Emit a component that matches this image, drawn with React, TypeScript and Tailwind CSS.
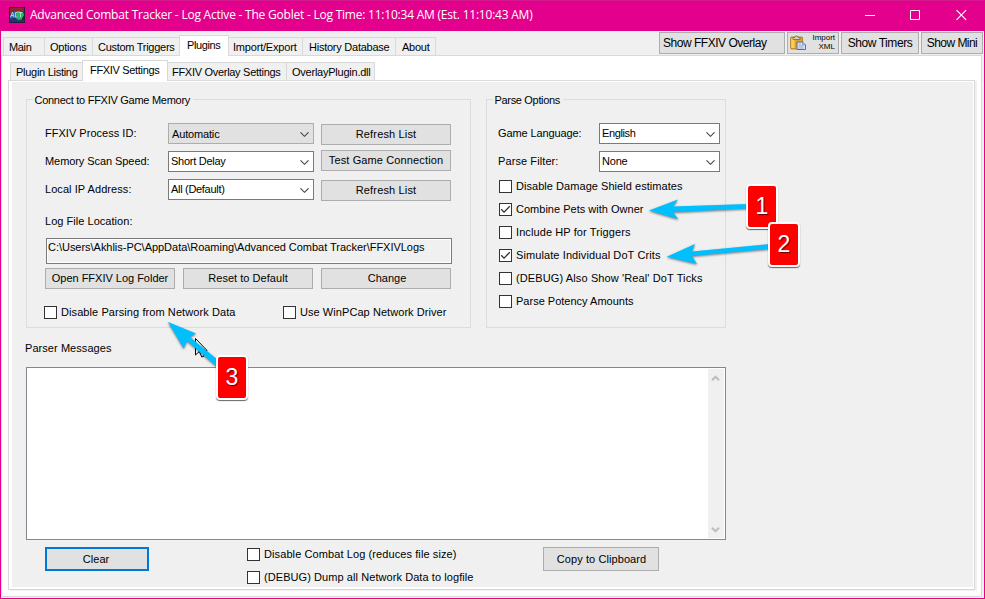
import { useLayoutEffect, useRef, type ReactNode } from "react";

/** Single-line text whose tracking is adjusted so that it spans `w` pixels. */
function T({ w, children, className = "" }: { w: number; children: string; className?: string }) {
  const ref = useRef<HTMLSpanElement>(null);
  useLayoutEffect(() => {
    const el = ref.current;
    if (!el) return;
    el.style.letterSpacing = "0px";
    const natural = el.getBoundingClientRect().width;
    el.style.letterSpacing = `${(w - 0.5 - natural) / children.length}px`;
  }, [w, children]);
  return (
    <span ref={ref} className={`inline-block shrink-0 self-start leading-[14px] whitespace-pre ${className}`}>
      {children}
    </span>
  );
}

function Tab({ text, w, className }: { text: string; w: number; className: string }) {
  return (
    <div className={`box-border flex h-[18px] shrink-0 border-t border-[#d9d9d9] bg-[#f0f0f0] pt-0.5 ${className}`}>
      <T w={w}>{text}</T>
    </div>
  );
}

function ActiveTab({ text, w, className }: { text: string; w: number; className: string }) {
  return (
    <div className={`relative z-10 -mb-px flex h-[21px] shrink-0 border-x border-t border-[#d9d9d9] bg-white pt-0.5 ${className}`}>
      <T w={w}>{text}</T>
    </div>
  );
}

function Button({ text, w, className = "" }: { text: string; w: number; className?: string }) {
  return (
    <button className={`flex h-[21px] w-[130px] shrink-0 justify-center border border-[#adadad] bg-[#e1e1e1] pt-0.5 ${className}`}>
      <T w={w}>{text}</T>
    </button>
  );
}

function Select({ text, w, className }: { text: string; w: number; className: string }) {
  return (
    <div className={`flex h-[21px] shrink-0 items-center justify-between border pr-1 ${className}`}>
      <T w={w}>{text}</T>
      <svg className="mb-px h-[5px] w-[9px]" viewBox="0 0 9 5" fill="none" stroke="#4a4a4a" strokeWidth="1.1">
        <path d="M0.5 0.3 4.5 4.3 8.5 0.3" />
      </svg>
    </div>
  );
}

function Check({ text, w, on = false }: { text: string; w: number; on?: boolean }) {
  return (
    <label className="flex h-[13px] shrink-0 gap-1">
      <span className="flex size-[13px] shrink-0 border border-[#333] bg-white">
        {on && (
          <svg className="size-[11px]" viewBox="0 0 11 11" fill="none" stroke="#333" strokeWidth="1.3">
            <path d="M1.2 5.3 4 8.1 9.8 2.3" />
          </svg>
        )}
      </span>
      <T w={w} className="-mt-px">{text}</T>
    </label>
  );
}

function Group({ title, w, className, children }: { title: string; w: number; className: string; children: ReactNode }) {
  return (
    <section className={`flex h-[229px] shrink-0 flex-col border border-[#dcdcdc] ${className}`}>
      <h2 className="-mt-[7px] ml-1.5 flex h-[14px] self-start bg-[#f0f0f0] pr-[3px] pl-[1.5px]">
        <T w={w}>{title}</T>
      </h2>
      {children}
    </section>
  );
}

function Badge({ n, className }: { n: string; className: string }) {
  return (
    <div
      className={`absolute flex h-[45px] w-[32px] items-center justify-center rounded-[4px] border-2 border-white bg-[#ff0000] pb-px text-[23px] leading-none text-white shadow-[0_1px_1px_rgba(0,0,0,0.6)] [text-shadow:1px_1px_1px_rgba(0,0,0,0.6)] ${className}`}
    >
      {n}
    </div>
  );
}

function AppIcon() {
  return (
    <svg className="mt-[6px] size-4" viewBox="0 0 16 16">
      <rect width="16" height="16" fill="#171d48" />
      <path d="M1 1h14v4l-4-1-5 1-5 3z" fill="#8f2430" />
      <path d="M1 9l4-4 5-1 5 3-2 5-4 2-3-3-5 1z" fill="#2f6bbd" />
      <path d="M8 4l6 1 1 3-3 5-3-1-2-4z" fill="#35b845" />
      <path d="M1 12l5-1 3 3 6-2v3H1z" fill="#27336f" />
      <path d="M1.500 10 3.500 5l1.500 5M2.200 8.500h2.400M8.500 5.500H6.500v4.500h2M9.500 5.500h4M11.500 5.500V10" stroke="#a9dbe2" strokeWidth=".9" fill="none" />
      <rect x=".5" y=".5" width="15" height="15" fill="none" stroke="#24203c" />
    </svg>
  );
}

function PasteIcon() {
  return (
    <svg className="mt-0.5 ml-0.5 size-4" viewBox="0 0 16 16">
      <rect x=".6" y="2" width="12" height="12" rx="1" fill="#e3a02a" stroke="#a8741c" strokeWidth=".8" />
      <path d="M1.200 3h3.300v10H1.200z" fill="#f9cf58" />
      <path d="M3 4.500V2.500h2L5.500 1h2L8 2.500h2v2z" fill="#d8d8c8" stroke="#6d6444" strokeWidth=".8" />
      <path d="M7 7h5.500l3 3v4.500H7z" fill="#dce8f8" stroke="#50627f" strokeWidth=".9" />
      <path d="M12.500 7v3h3M8.500 9H11M8.500 11h5M8.500 13h5" stroke="#7895c2" strokeWidth=".8" fill="none" />
    </svg>
  );
}

export default function App() {
  return (
    <div className="relative flex h-[599px] w-[985px] flex-col overflow-hidden border-x border-b border-[#e3008c] bg-[#f0f0f0] font-['Liberation_Sans',Arial,sans-serif] text-[11px] text-black">
      <header className="flex h-[31px] shrink-0 border-t border-[#d31a8c] bg-[#e3008c] pl-2 font-['Open_Sans','Noto_Sans',sans-serif] text-[12px] text-white">
        <AppIcon />
        <T w={503} className="mt-[7px] ml-[5px]">
          Advanced Combat Tracker - Log Active - The Goblet - Log Time: 11:10:34 AM (Est. 11:10:43 AM)
        </T>
        <svg className="mt-2 mr-[17px] ml-auto h-3 w-[102px]" viewBox="0 0 102 12" fill="none" stroke="white">
          <path d="M0 6.500h10M45.500 1.500h9v9h-9z" />
          <path d="M91.500 1.200l9.600 9.600M101.100 1.200l-9.600 9.600" strokeWidth="1.2" />
        </svg>
      </header>

      <nav className="flex h-6 shrink-0 items-end pr-px pl-0.5">
        <Tab text="Main" w={23} className="w-[41px] border-l pl-[5px]" />
        <Tab text="Options" w={37} className="w-12 border-l pl-[5px]" />
        <Tab text="Custom Triggers" w={77} className="w-[87px] border-l pl-[5px]" />
        <ActiveTab text="Plugins" w={34} className="w-[50px] pl-[7px]" />
        <Tab text="Import/Export" w={64} className="w-[73px] pl-1" />
        <Tab text="History Database" w={81} className="w-[93px] border-l pl-1.5" />
        <Tab text="About" w={28} className="w-[41px] border-x pl-1.5" />
        <div className="mb-px ml-auto flex gap-0.5 text-[12px]">
          <button className="flex h-[22px] w-[126px] border border-[#adadad] bg-[#e1e1e1] pt-[3px] pl-[3px]">
            <T w={104}>Show FFXIV Overlay</T>
          </button>
          <button className="flex h-[22px] w-[52px] justify-between border border-[#adadad] bg-[#e1e1e1] pr-[3px]">
            <PasteIcon />
            <span className="flex flex-col items-end text-[8px]">
              <T w={23} className="self-end! leading-[10px]!">Import</T>
              <T w={17} className="self-end! leading-[8px]!">XML</T>
            </span>
          </button>
          <button className="flex h-[22px] w-[78px] justify-center border border-[#adadad] bg-[#e1e1e1] pt-[3px]">
            <T w={65}>Show Timers</T>
          </button>
          <button className="flex h-[22px] w-[62px] justify-center border border-[#adadad] bg-[#e1e1e1] pt-[3px]">
            <T w={51}>Show Mini</T>
          </button>
        </div>
      </nav>

      <main className="mr-0.5 mb-px flex h-[542px] w-[981px] shrink-0 flex-col border border-[#d9d9d9] bg-white">
        <nav className="flex h-6 shrink-0 items-end pl-2">
          <Tab text="Plugin Listing" w={62} className="w-[72px] border-l pl-[5px]" />
          <ActiveTab text="FFXIV Settings" w={70} className="w-[86px] pl-[7px]" />
          <Tab text="FFXIV Overlay Settings" w={109} className="w-[118px] pl-1" />
          <Tab text="OverlayPlugin.dll" w={79} className="w-[89px] border-x pl-[5px]" />
        </nav>
        <div className="ml-[6px] flex h-[510px] w-[967px] shrink-0 flex-col border border-[#d9d9d9] bg-white pt-px pr-px pb-0.5 pl-[3px] shadow-[2px_1px_0_#f0f0f0]">
          <div className="flex h-[505px] flex-col bg-[#f0f0f0] pt-[17px] pl-[14px]">
            <div className="flex gap-[15px]">
              <Group title="Connect to FFXIV Game Memory" w={156} className="w-[445px]">
                <div className="flex h-[107px] shrink-0 pl-[18px]">
                  <div className="flex w-[123px] flex-col gap-[14px] pt-[19px]">
                    <T w={92}>FFXIV Process ID:</T>
                    <T w={105}>Memory Scan Speed:</T>
                    <T w={87}>Local IP Address:</T>
                  </div>
                  <div className="mr-[7px] flex w-[146px] flex-col gap-[7px] pt-4">
                    <Select text="Automatic" w={48} className="border-[#adadad] bg-[#e1e1e1] pt-[3px] pl-[3px]" />
                    <Select text="Short Delay" w={55} className="border-[#7a7a7a] bg-white pt-0.5 pl-0.5" />
                    <Select text="All (Default)" w={54} className="border-[#7a7a7a] bg-white pt-0.5 pl-0.5" />
                  </div>
                  <div className="flex flex-col pt-[17px]">
                    <Button text="Refresh List" w={61} />
                    <Button text="Test Game Connection" w={115} className="mt-[5px]" />
                    <Button text="Refresh List" w={61} className="mt-[9px]" />
                  </div>
                </div>
                <T w={88} className="ml-[18px]">Log File Location:</T>
                <div className="mt-[10px] ml-[19px] flex h-[26px] w-[406px] shrink-0 border border-[#7a7a7a] bg-white p-px">
                  <div className="flex flex-1 bg-[#f0f0f0]">
                    <T w={377}>{"C:\\Users\\Akhlis-PC\\AppData\\Roaming\\Advanced Combat Tracker\\FFXIVLogs"}</T>
                  </div>
                </div>
                <div className="mt-1 ml-[18px] flex gap-2">
                  <Button text="Open FFXIV Log Folder" w={117} />
                  <Button text="Reset to Default" w={80} />
                  <Button text="Change" w={39} className="pl-0.5" />
                </div>
                <div className="mt-[17px] ml-[17px] flex">
                  <div className="w-[239px]">
                    <Check text="Disable Parsing from Network Data" w={175} />
                  </div>
                  <Check text="Use WinPCap Network Driver" w={147} />
                </div>
              </Group>

              <Group title="Parse Options" w={66} className="w-[240px]">
                <div className="flex pl-[11px]">
                  <div className="flex w-[101px] flex-col gap-[14px] pt-[19px]">
                    <T w={84}>Game Language:</T>
                    <T w={61}>Parse Filter:</T>
                  </div>
                  <div className="flex w-[121px] flex-col gap-[7px] pt-4">
                    <Select text="English" w={34} className="border-[#7a7a7a] bg-white pt-0.5 pl-0.5" />
                    <Select text="None" w={26} className="border-[#7a7a7a] bg-white pt-0.5 pl-0.5" />
                  </div>
                </div>
                <div className="mt-2 ml-3 flex flex-col gap-[10px]">
                  <Check text="Disable Damage Shield estimates" w={167} />
                  <Check text="Combine Pets with Owner" w={128} on />
                  <Check text="Include HP for Triggers" w={115} />
                  <Check text="Simulate Individual DoT Crits" w={145} on />
                  <Check text="(DEBUG) Also Show 'Real' DoT Ticks" w={187} />
                  <Check text="Parse Potency Amounts" w={118} />
                </div>
              </Group>
            </div>

            <T w={87} className="mt-[13px] -ml-px">Parser Messages</T>
            <div className="mt-3 flex h-[173px] w-[700px] shrink-0 justify-end border border-[#828790] bg-white p-px">
              <div className="flex w-4 flex-col items-center justify-between bg-[#f0f0f0] pt-1.5 pr-0.5 pb-[5px]">
                <svg className="h-[6px] w-[9px]" viewBox="0 0 9 6" fill="none" stroke="#bdbdbd" strokeWidth="2">
                  <path d="M1 5.200 4.500 1.700 8 5.200" />
                </svg>
                <svg className="h-[6px] w-[9px]" viewBox="0 0 9 6" fill="none" stroke="#bdbdbd" strokeWidth="2">
                  <path d="M1 .8 4.500 4.300 8 .8" />
                </svg>
              </div>
            </div>
            <div className="mt-[7px] ml-[19px] flex">
              <button className="flex h-6 w-[104px] justify-center border-2 border-[#0078d7] bg-[#e1e1e1] pt-[3px] pr-0.5">
                <T w={27}>Clear</T>
              </button>
              <div className="mt-px ml-[98px] flex w-[296px] flex-col gap-[10px]">
                <Check text="Disable Combat Log (reduces file size)" w={193} />
                <Check text="(DEBUG) Dump all Network Data to logfile" w={210} />
              </div>
              <button className="flex h-6 w-[116px] justify-center border border-[#adadad] bg-[#e1e1e1] pt-1 pl-px">
                <T w={90}>Copy to Clipboard</T>
              </button>
            </div>
          </div>
        </div>
      </main>

      {/* Annotations drawn over the window: pointer, arrows and step numbers */}
      <svg className="pointer-events-none absolute top-0 -left-px z-20 h-[599px] w-[985px]" viewBox="0 0 985 599">
        <path d="M195.500 338.500v16.500l3.800-3.600 2.500 5.600 2.400-1-2.500-5.500h5.300z" fill="white" stroke="black" />
        <g fill="#00bfff" className="drop-shadow-[0_1px_1px_rgba(0,0,0,0.5)]">
          <path d="M649 210.500 678 199.500 673 206.500 748 204V208.500L673 212.300 678.500 219.300z" />
          <path d="M666.700 256.700 695 244 692 251.500 770 244V248.800L692 256 697 264z" />
          <path d="M168 322 196 333.500 190 337 218 360V367.800L187 341 183.700 348.500z" />
        </g>
      </svg>
      <Badge n="1" className="top-[184px] left-[745px] z-30" />
      <Badge n="2" className="top-[222px] left-[767px] z-30" />
      <Badge n="3" className="top-[355px] left-[215px] z-30" />
    </div>
  );
}
